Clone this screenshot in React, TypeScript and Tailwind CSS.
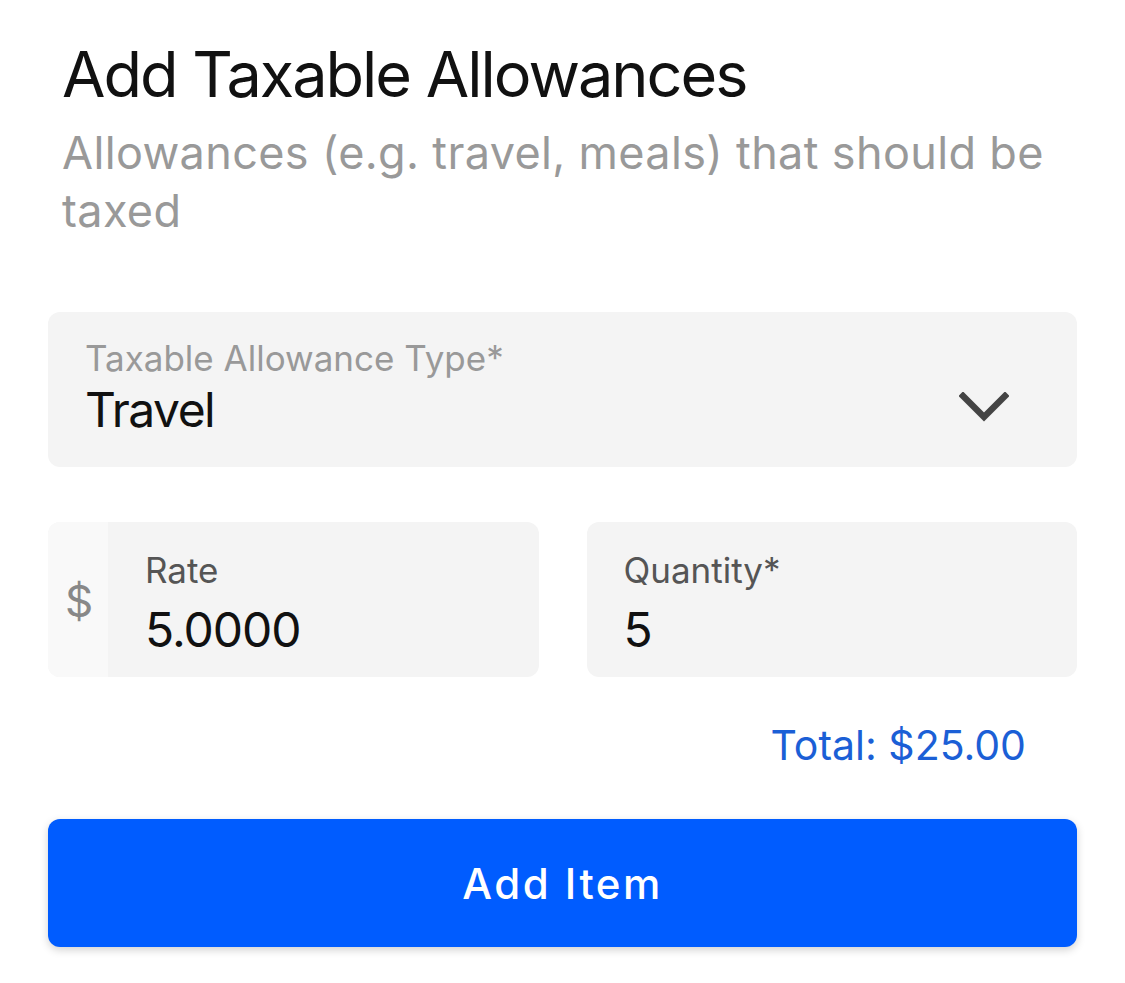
import React, { useState } from 'react';

const FONT = "font-['Inter','Liberation_Sans',sans-serif]";

const Chevron: React.FC = () => (
  <svg width="50" height="30" viewBox="0 0 50 30" fill="none">
    <path d="M4 4 L25 25 L46 4" stroke="#444" strokeWidth="6.5" strokeLinecap="square" />
  </svg>
);

const App: React.FC = () => {
  const [rate] = useState(5);
  const [qty] = useState(5);
  const total = (rate * qty).toFixed(2);

  return (
    <div className={`w-[1125px] h-[983px] bg-white px-[48px] ${FONT}`}>
      {/* header */}
      <div className="pl-[14px] pt-[43px]">
        <h1 className="text-[63px] leading-none text-[#111] tracking-[-2px]">Add Taxable Allowances</h1>
        <p className="mt-[18px] text-[45px] leading-[58px] text-[#999] tracking-[0.35px]">
          Allowances (e.g. travel, meals) that should be taxed
        </p>
      </div>

      {/* type select */}
      <div className="mt-[72px] h-[155px] rounded-[12px] bg-[#f4f4f4] flex items-start pl-[37px] pr-[68px] pt-[29px]">
        <div className="flex-1">
          <div className="text-[35px] leading-none text-[#999]">Taxable Allowance Type*</div>
          <div className="mt-[10px] text-[48px] leading-none text-[#111] tracking-[-1.5px]">Travel</div>
        </div>
        <div className="self-center pt-[6px]">
          <Chevron />
        </div>
      </div>

      {/* rate / quantity */}
      <div className="mt-[55px] grid grid-cols-2 gap-[48px]">
        <div className="h-[155px] rounded-[12px] bg-[#f4f4f4] flex overflow-hidden">
          <div className="w-[60px] bg-[#f9f9f9] flex items-center justify-center text-[44px] text-[#888] pl-[2px] pt-[2px]">$</div>
          <div className="flex-1 pl-[37px] pt-[31px]">
            <div className="text-[35px] leading-none text-[#555]">Rate</div>
            <div className="mt-[18px] text-[48px] leading-none text-[#111] tracking-[-1px]">{rate.toFixed(4)}</div>
          </div>
        </div>
        <div className="h-[155px] rounded-[12px] bg-[#f4f4f4] pl-[37px] pt-[31px]">
          <div className="text-[35px] leading-none text-[#555]">Quantity*</div>
          <div className="mt-[18px] text-[48px] leading-none text-[#111] tracking-[-1px]">{qty}</div>
        </div>
      </div>

      {/* total */}
      <div className="mt-[48px] pr-[51px] flex justify-end">
        <span className="text-[41px] leading-none text-[#1b5fd6]">Total: ${total}</span>
      </div>

      {/* button */}
      <button className="mt-[53px] w-full h-[128px] rounded-[12px] bg-[#005cff] text-white text-[42px] font-medium tracking-[2.5px] shadow-[0_3px_8px_rgba(0,0,0,0.18)]">
        Add Item
      </button>
    </div>
  );
};

export default App;
